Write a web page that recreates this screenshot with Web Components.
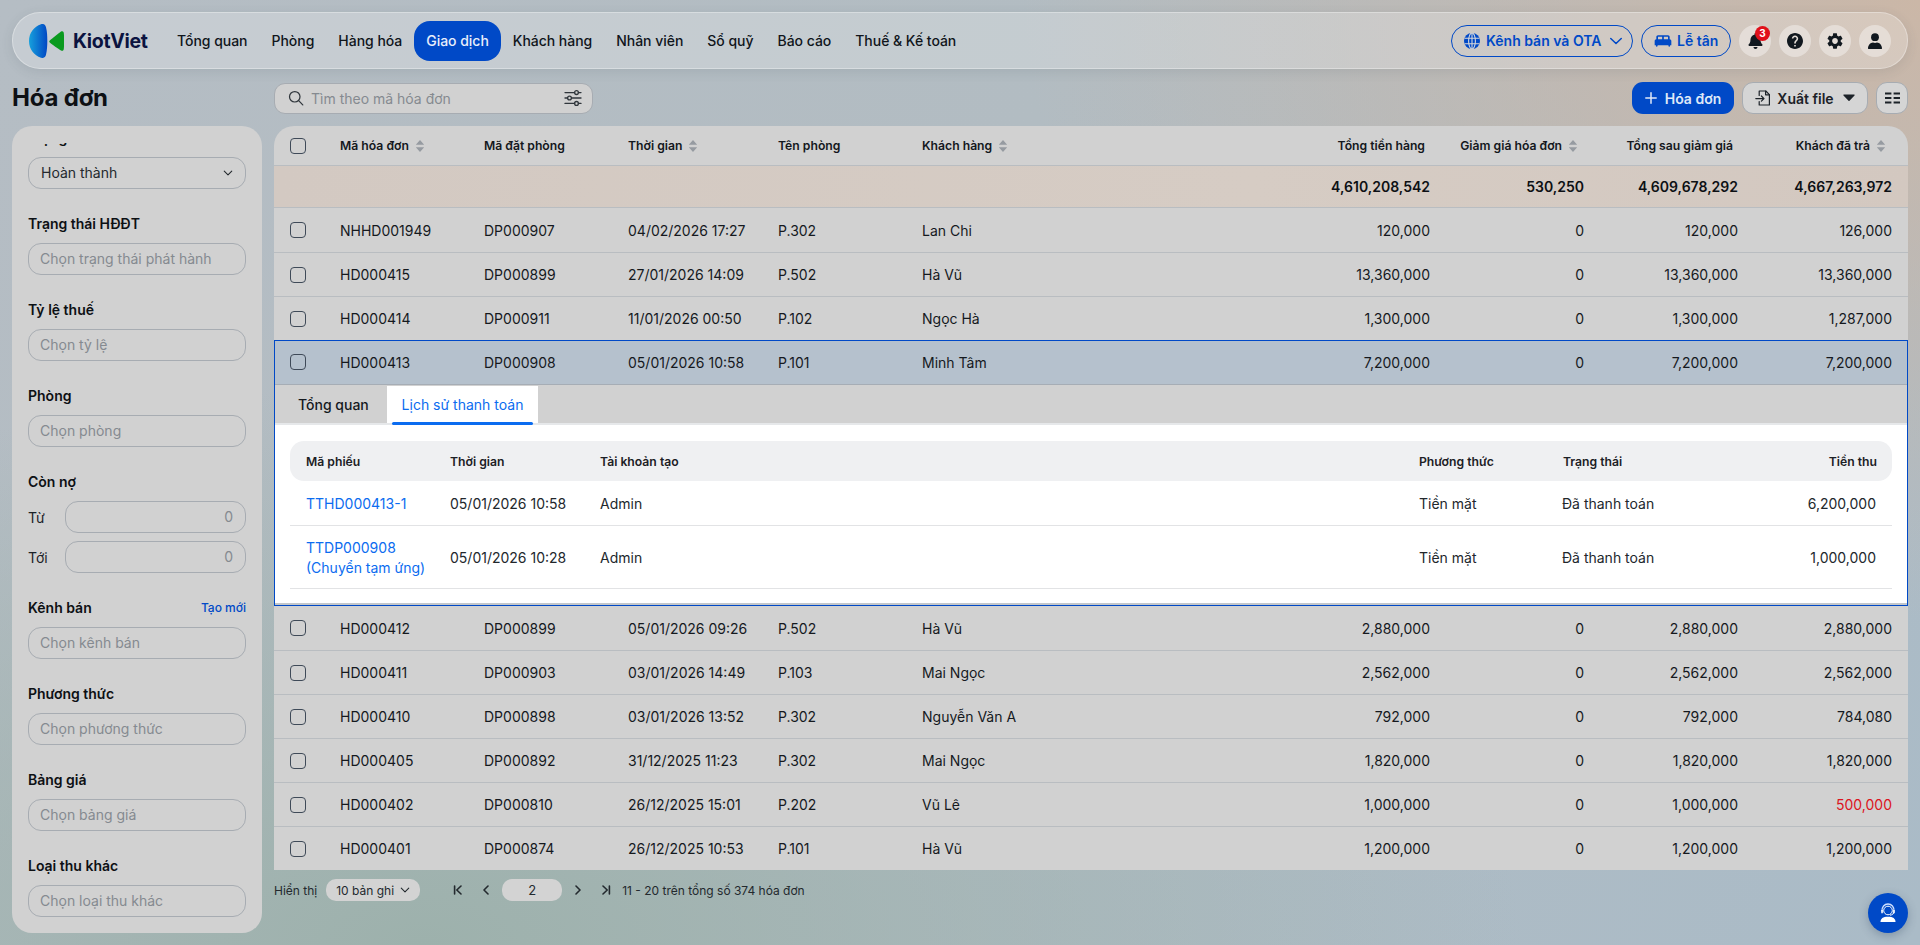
<!DOCTYPE html>
<html lang="vi">
<head>
<meta charset="utf-8">
<title>Hóa đơn - KiotViet</title>
<style>
  html, body { height: 100%; }
  body {
    margin: 0;
    height: 945px;
    overflow: hidden;
    font-family: Inter, "Noto Sans", sans-serif;
    font-size: 14px;
    color: #111418;
    background:
      radial-gradient(900px 620px at 100% 0%, #cbb7a7 0%, rgba(203,183,167,0) 100%),
      radial-gradient(1100px 560px at 22% 100%, #9db1ac 0%, rgba(157,177,172,0) 100%),
      linear-gradient(120deg, #b5bdc4 0%, #b2bcc2 45%, #aabbc7 100%);
  }
</style>
</head>
<body>
<kv-app>
  <kv-topbar slot="top">
    <kv-nav-item>Tổng quan</kv-nav-item>
    <kv-nav-item>Phòng</kv-nav-item>
    <kv-nav-item>Hàng hóa</kv-nav-item>
    <kv-nav-item active>Giao dịch</kv-nav-item>
    <kv-nav-item>Khách hàng</kv-nav-item>
    <kv-nav-item>Nhân viên</kv-nav-item>
    <kv-nav-item>Sổ quỹ</kv-nav-item>
    <kv-nav-item>Báo cáo</kv-nav-item>
    <kv-nav-item>Thuế &amp; Kế toán</kv-nav-item>
  </kv-topbar>

  <kv-page-title slot="title">Hóa đơn</kv-page-title>
  <kv-toolbar slot="tools"></kv-toolbar>

  <kv-sidebar slot="side">
    <kv-field label="Trạng thái" value="Hoàn thành" arrow></kv-field>
    <kv-field label="Trạng thái HĐĐT" placeholder="Chọn trạng thái phát hành"></kv-field>
    <kv-field label="Tỷ lệ thuế" placeholder="Chọn tỷ lệ"></kv-field>
    <kv-field label="Phòng" placeholder="Chọn phòng"></kv-field>
    <kv-range-field label="Còn nợ"></kv-range-field>
    <kv-field label="Kênh bán" placeholder="Chọn kênh bán" action="Tạo mới"></kv-field>
    <kv-field label="Phương thức" placeholder="Chọn phương thức"></kv-field>
    <kv-field label="Bảng giá" placeholder="Chọn bảng giá"></kv-field>
    <kv-field label="Loại thu khác" placeholder="Chọn loại thu khác"></kv-field>
  </kv-sidebar>

  <kv-invoice-table slot="table"></kv-invoice-table>
  <kv-pagination slot="pager"></kv-pagination>
</kv-app>
<kv-chat-button></kv-chat-button>

<script>
const ICONS = {
  search: '<svg viewBox="0 0 18 18" fill="none" stroke="currentColor" stroke-width="1.4" stroke-linecap="round"><circle cx="7.6" cy="7.6" r="5.9"/><path d="M12 12l4.6 4.8"/></svg>',
  sliders: '<svg viewBox="0 0 18 18" fill="none" stroke="currentColor" stroke-width="1.3" stroke-linecap="round"><path d="M1 3.6h9.6M14.4 3.6H17M1 9h2.6M7.4 9H17M1 14.4h9.6M14.4 14.4H17"/><circle cx="12.5" cy="3.6" r="1.9"/><circle cx="5.5" cy="9" r="1.9"/><circle cx="12.5" cy="14.4" r="1.9"/></svg>',
  globe: '<svg viewBox="0 0 16 16"><circle cx="8" cy="8" r="8" fill="currentColor"/><g fill="none" stroke="#d6d8da" stroke-width="1.1"><ellipse cx="8" cy="8" rx="3.4" ry="8"/><path d="M8 0v16M.5 5.3h15M.5 10.7h15"/></g></svg>',
  bed: '<svg viewBox="0 0 24 24" fill="currentColor"><path d="M20 10V7c0-1.1-.9-2-2-2H6c-1.1 0-2 .9-2 2v3c-1.1 0-2 .9-2 2v5h1.33L4 19h1l.67-2h12.67l.66 2h1l.67-2H22v-5c0-1.1-.9-2-2-2zm-9 0H6V7h5v3zm7 0h-5V7h5v3z"/></svg>',
  bell: '<svg viewBox="0 0 448 512" fill="currentColor"><path d="M224 512c35.32 0 63.97-28.65 63.97-64H160.03c0 35.35 28.65 64 63.97 64zm215.39-149.71c-19.32-20.76-55.47-51.99-55.47-154.29 0-77.7-54.48-139.9-127.94-155.16V32c0-17.67-14.32-32-31.98-32s-31.98 14.33-31.98 32v20.84C118.56 68.1 64.08 130.3 64.08 208c0 102.3-36.15 133.53-55.47 154.29-6 6.45-8.66 14.16-8.61 21.71.11 16.4 12.98 32 32.1 32h383.8c19.12 0 32-15.6 32.1-32 .05-7.55-2.61-15.27-8.61-21.71z"/></svg>',
  help: '<svg viewBox="2 2 20 20" fill="currentColor"><path d="M12 2C6.48 2 2 6.48 2 12s4.48 10 10 10 10-4.48 10-10S17.52 2 12 2zm1 17h-2v-2h2v2zm2.07-7.75l-.9.92C13.45 12.9 13 13.5 13 15h-2v-.5c0-1.1.45-2.1 1.17-2.83l1.24-1.26c.37-.36.59-.86.59-1.41 0-1.1-.9-2-2-2s-2 .9-2 2H8c0-2.21 1.79-4 4-4s4 1.79 4 4c0 .88-.36 1.68-.93 2.25z"/></svg>',
  gear: '<svg viewBox="2 2 20 20" fill="currentColor"><path d="M19.14 12.94c.04-.3.06-.61.06-.94 0-.32-.02-.64-.07-.94l2.03-1.58c.18-.14.23-.41.12-.61l-1.92-3.32c-.12-.22-.37-.29-.59-.22l-2.39.96c-.5-.38-1.03-.7-1.62-.94l-.36-2.54c-.04-.24-.24-.41-.48-.41h-3.84c-.24 0-.43.17-.47.41l-.36 2.54c-.59.24-1.13.57-1.62.94l-2.39-.96c-.22-.08-.47 0-.59.22L2.74 8.87c-.12.21-.08.47.12.61l2.03 1.58c-.05.3-.09.63-.09.94s.02.64.07.94l-2.03 1.58c-.18.14-.23.41-.12.61l1.92 3.32c.12.22.37.29.59.22l2.39-.96c.5.38 1.03.7 1.62.94l.36 2.54c.05.24.24.41.48.41h3.84c.24 0 .44-.17.47-.41l.36-2.54c.59-.24 1.13-.56 1.62-.94l2.39.96c.22.08.47 0 .59-.22l1.92-3.32c.12-.22.07-.47-.12-.61l-2.01-1.58zM12 15.6c-1.98 0-3.6-1.62-3.6-3.6s1.62-3.6 3.6-3.6 3.6 1.62 3.6 3.6-1.62 3.6-3.6 3.6z"/></svg>',
  user: '<svg viewBox="0 0 16 16" fill="currentColor"><circle cx="8" cy="4.2" r="3.9"/><path d="M1 15.6c0-3.6 2.4-5.9 5-6.1.6.3 1.3.5 2 .5s1.4-.2 2-.5c2.6.2 5 2.5 5 6.1 0 .2-.2.4-.4.4H1.4c-.2 0-.4-.2-.4-.4z"/></svg>',
  chevron: '<svg viewBox="0 0 12 12" fill="none" stroke="currentColor" stroke-width="1.3" stroke-linecap="round" stroke-linejoin="round"><path d="M1.5 3.8L6 8.2l4.5-4.4"/></svg>',
  caret: '<svg viewBox="0 0 12 8" fill="currentColor"><path d="M1 .5h10c.6 0 .9.7.5 1.1l-5 5.2c-.3.3-.7.3-1 0l-5-5.2C.1 1.2.4.5 1 .5z"/></svg>',
  plus: '<svg viewBox="0 0 12 12" fill="none" stroke="currentColor" stroke-width="1.5" stroke-linecap="round"><path d="M6 .8v10.4M.8 6h10.4"/></svg>',
  exportfile: '<svg viewBox="0 0 16 16" fill="none" stroke="currentColor" stroke-width="1.2" stroke-linecap="round" stroke-linejoin="round"><path d="M4.2 5.4V1h6.6l3.6 3.6V15H4.2v-3.4"/><path d="M10.6 1v3.8h3.8"/><path d="M.8 8.6h8M6.4 6l2.6 2.6-2.6 2.6"/></svg>',
  columns: '<svg viewBox="0 0 15 12" fill="currentColor"><path d="M0 .5h6.4v2H0zM8.6.5H15v2H8.6zM0 5h6.4v2H0zM8.6 5H15v2H8.6zM0 9.5h6.4v2H0zM8.6 9.5H15v2H8.6z"/></svg>',
  first: '<svg viewBox="0 0 10 10" fill="none" stroke="currentColor" stroke-width="1.6" stroke-linecap="round" stroke-linejoin="round"><path d="M1.6 1v8M8 1L3.8 5 8 9"/></svg>',
  prev: '<svg viewBox="0 0 10 10" fill="none" stroke="currentColor" stroke-width="1.6" stroke-linecap="round" stroke-linejoin="round"><path d="M7 1L3 5l4 4"/></svg>',
  next: '<svg viewBox="0 0 10 10" fill="none" stroke="currentColor" stroke-width="1.6" stroke-linecap="round" stroke-linejoin="round"><path d="M3 1l4 4-4 4"/></svg>',
  last: '<svg viewBox="0 0 10 10" fill="none" stroke="currentColor" stroke-width="1.6" stroke-linecap="round" stroke-linejoin="round"><path d="M8.4 1v8M2 1l4.2 4L2 9"/></svg>',
  sort: '<svg viewBox="0 0 9 12" fill="currentColor"><path d="M4.5 0l4.2 4.8H.3zM4.5 12L.3 7.2h8.4z"/></svg>',
  headset: '<svg viewBox="0 0 20 20"><path d="M2.5 19c0-3.4 2.4-5.3 7.5-5.3s7.500 1.900 7.500 5.300z" fill="#fff"/><circle cx="10" cy="7.500" r="4.300" fill="none" stroke="#fff" stroke-width="1"/><path d="M4 8.500C3.600 3.800 6.500 1 10 1s6.400 2.800 6 7.500" fill="none" stroke="#cfe0ff" stroke-width="1.300"/><path d="M16 8.500c0 2-1.500 3.500-4 3.700" fill="none" stroke="#fff" stroke-width="1"/><path d="M3.300 7h1.500v3.300H3.300zM15.200 7h1.500v3.300h-1.500z" fill="#fff"/></svg>'
};

class KvIcon extends HTMLElement {
  connectedCallback() {
    const size = this.getAttribute('size') || 16;
    const height = this.getAttribute('height') || size;
    this.attachShadow({ mode: 'open' }).innerHTML = `
      <style>
        :host { display: inline-flex; flex: none; width: ${size}px; height: ${height}px; }
        svg { width: 100%; height: 100%; display: block; }
      </style>${ICONS[this.getAttribute('name')] || ''}`;
  }
}

class KvApp extends HTMLElement {
  constructor() {
    super();
    this.attachShadow({ mode: 'open' }).innerHTML = `
      <style>
        :host { display: block; padding: 12px 12px 0; }
        .grid {
          display: grid;
          grid-template-columns: 250px 1fr;
          grid-template-rows: 32px auto;
          column-gap: 12px;
          row-gap: 12px;
          margin-top: 13px;
        }
        .right { display: flex; flex-direction: column; min-width: 0; }
      </style>
      <slot name="top"></slot>
      <div class="grid">
        <slot name="title"></slot>
        <slot name="tools"></slot>
        <slot name="side"></slot>
        <div class="right">
          <slot name="table"></slot>
          <slot name="pager"></slot>
        </div>
      </div>`;
  }
}

class KvTopbar extends HTMLElement {
  constructor() {
    super();
    this.attachShadow({ mode: 'open' }).innerHTML = `
      <style>
        :host {
          display: flex;
          align-items: center;
          height: 57px;
          box-sizing: border-box;
          padding: 0 16px;
          border: 1px solid rgba(255,255,255,.32);
          border-radius: 28px;
          background: rgba(255,255,255,.24);
          box-shadow: 0 3px 12px rgba(60,70,80,.12);
        }
        .logo { display: flex; align-items: center; width: 136px; flex: none; }
        .logo svg { width: 35px; height: 34px; flex: none; }
        .brand { margin-left: 9px; font-size: 19.5px; font-weight: 700; letter-spacing: -.3px; color: #0b1340; }
        nav { display: flex; align-items: center; }
        .tools { margin-left: auto; display: flex; align-items: center; gap: 8px; }
        .pill {
          display: flex; align-items: center; height: 32px; box-sizing: border-box; white-space: nowrap;
          padding: 0 12px; border: 1px solid #0049c7; border-radius: 16px;
          color: #0049c7; font-weight: 600;
        }
        .ota { width: 182px; gap: 6px; }
        .ota kv-icon:last-child { margin-left: 2px; }
        .desk { width: 90px; gap: 4px; padding: 0 11px; }
        .round {
          position: relative; width: 32px; height: 32px; border-radius: 50%;
          background: rgba(255,255,255,.38); color: #11181f;
          display: flex; align-items: center; justify-content: center;
        }
        .badge {
          position: absolute; top: 1px; left: 16px; width: 15px; height: 15px; border-radius: 50%;
          background: #e0101a; color: #fff; font-size: 10px; font-weight: 700;
          display: flex; align-items: center; justify-content: center;
        }
      </style>
      <div class="logo">
        <svg viewBox="0 0 35 34">
          <defs><linearGradient id="lens" x1="0" x2="1" y1="0" y2="0"><stop offset="0" stop-color="#17a0dc"/><stop offset="1" stop-color="#0047c4"/></linearGradient></defs>
          <path d="M12 .2c2.500-.8 4.400.5 5 3 1.200 4.600 1.300 9 1.300 13.800 0 4.800-.3 9.200-1.300 13.800-.6 2.500-2.500 3.800-5 3C5 31.500 0 25 0 17S5 2.500 12 .2z" fill="url(#lens)"/>
          <path d="M32 7.600c1.500-1 2.600-.3 2.800 1.400.5 5.300.5 10.700 0 16-.2 1.700-1.300 2.400-2.800 1.400-3-2-8.500-5.600-11.200-8-.7-.7-.7-1.100 0-1.800 2.700-2.400 8.200-6.900 11.200-9z" fill="#0a9a1f"/>
        </svg>
        <span class="brand">KiotViet</span>
      </div>
      <nav><slot></slot></nav>
      <div class="tools">
        <div class="pill ota"><kv-icon name="globe"></kv-icon><span>Kênh bán và OTA</span><kv-icon name="chevron" size="14"></kv-icon></div>
        <div class="pill desk"><kv-icon name="bed" size="20"></kv-icon><span>Lễ tân</span></div>
        <div class="round"><kv-icon name="bell" size="15" height="16"></kv-icon><span class="badge">3</span></div>
        <div class="round"><kv-icon name="help"></kv-icon></div>
        <div class="round"><kv-icon name="gear"></kv-icon></div>
        <div class="round"><kv-icon name="user"></kv-icon></div>
      </div>`;
  }
}

class KvNavItem extends HTMLElement {
  constructor() {
    super();
    this.attachShadow({ mode: 'open' }).innerHTML = `
      <style>
        :host {
          display: flex; align-items: center; height: 40px; padding: 0 12px;
          border-radius: 16px; font-weight: 500; letter-spacing: -.03px; color: #10151b; white-space: nowrap;
        }
        :host([active]) { background: #0049c7; color: #e8eefb; }
      </style><slot></slot>`;
  }
}

class KvPageTitle extends HTMLElement {
  constructor() {
    super();
    this.attachShadow({ mode: 'open' }).innerHTML = `
      <style>:host { display: flex; align-items: center; padding-bottom: 2px; font-size: 24px; font-weight: 700; color: #0d1014; letter-spacing: -.2px; }</style>
      <slot></slot>`;
  }
}

class KvToolbar extends HTMLElement {
  constructor() {
    super();
    this.attachShadow({ mode: 'open' }).innerHTML = `
      <style>
        :host { display: flex; align-items: center; gap: 8px; }
        .search {
          width: 319px; height: 31px; box-sizing: border-box; margin-right: auto;
          display: flex; align-items: center; padding: 0 10px 0 13px; gap: 7px;
          background: #d1d1d1; border: 1px solid #a7acb2; border-radius: 11px; color: #30363c;
        }
        .search span { flex: 1; color: #858a90; }
        .btn {
          height: 32px; box-sizing: border-box; display: flex; align-items: center;
          border-radius: 11px; font-weight: 600;
        }
        .add { width: 102px; justify-content: center; gap: 8px; background: #0049c7; color: #dfe8f8; }
        .ghost { background: #d5d5d5; border: 1px solid #a7acb2; color: #1c2228; }
        .export { width: 126px; justify-content: center; gap: 6px; }
        .cols { width: 32px; justify-content: center; }
      </style>
      <div class="search">
        <kv-icon name="search"></kv-icon><span>Tìm theo mã hóa đơn</span><kv-icon name="sliders" size="18"></kv-icon>
      </div>
      <div class="btn add"><kv-icon name="plus" size="12"></kv-icon>Hóa đơn</div>
      <div class="btn ghost export"><kv-icon name="exportfile"></kv-icon>Xuất file<kv-icon name="caret" size="12" height="8" style="margin-left:3px"></kv-icon></div>
      <div class="btn ghost cols"><kv-icon name="columns" size="15" height="12"></kv-icon></div>`;
  }
}

class KvSidebar extends HTMLElement {
  constructor() {
    super();
    this.attachShadow({ mode: 'open' }).innerHTML = `
      <style>
        :host {
          display: block; height: 807px; box-sizing: border-box;
          padding: 17px 16px 0; background: #d1d1d1; border-radius: 20px;
        }
        .scroll { height: 774px; overflow: hidden; }
        .inner { display: flex; flex-direction: column; gap: 24px; margin-top: -16px; }
      </style>
      <div class="scroll"><div class="inner"><slot></slot></div></div>`;
  }
}

const FIELD_CSS = `
  .head { display: flex; align-items: center; justify-content: space-between; height: 20px; margin-bottom: 10px; }
  .label { font-weight: 600; color: #0d1014; }
  .action { font-size: 12px; font-weight: 500; color: #0049c7; }
  .input {
    height: 32px; box-sizing: border-box; display: flex; align-items: center; justify-content: space-between;
    padding: 0 12px 1px 11px; border: 1px solid #a7acb2; border-radius: 13px; color: #858a90;
  }
  .input.filled { color: #24292e; padding-left: 12px; }
`;

class KvField extends HTMLElement {
  connectedCallback() {
    const value = this.getAttribute('value');
    const action = this.getAttribute('action');
    this.attachShadow({ mode: 'open' }).innerHTML = `
      <style>:host { display: block; } ${FIELD_CSS}</style>
      <div class="head">
        <span class="label">${this.getAttribute('label')}</span>
        ${action ? `<span class="action">${action}</span>` : ''}
      </div>
      <div class="input ${value ? 'filled' : ''}">
        <span>${value || this.getAttribute('placeholder')}</span>
        ${this.hasAttribute('arrow') ? '<kv-icon name="chevron" size="10" style="color:#24292e"></kv-icon>' : ''}
      </div>`;
  }
}

class KvRangeField extends HTMLElement {
  connectedCallback() {
    this.attachShadow({ mode: 'open' }).innerHTML = `
      <style>
        :host { display: block; } ${FIELD_CSS}
        .line { display: grid; grid-template-columns: 37px 1fr; align-items: center; margin-bottom: 8px; color: #1c2228; }
        .line:last-child { margin-bottom: 0; }
        .input { justify-content: flex-end; }
      </style>
      <div class="head"><span class="label">${this.getAttribute('label')}</span></div>
      <div class="line"><span>Từ</span><div class="input">0</div></div>
      <div class="line"><span>Tới</span><div class="input">0</div></div>`;
  }
}

const ROW_CSS = `
  :host { display: block; }
  .row {
    display: grid; grid-template-columns: var(--cols); align-items: center;
    padding: 0 16px; height: 44px; box-sizing: border-box; border-bottom: 1px solid #b9bdc1;
    color: #15191e;
  }
  .num { text-align: right; }
  .box { display: block; width: 16px; height: 16px; box-sizing: border-box; border: 1.4px solid #3f4a58; border-radius: 4px; }
`;

class KvInvoiceRow extends HTMLElement {
  connectedCallback() {
    const a = (n) => this.getAttribute(n);
    this.attachShadow({ mode: 'open' }).innerHTML = `
      <style>${ROW_CSS}
        :host([lead]) .row { height: 45px; }
        :host([selected]) .row { height: 45px; background: #b5c1cd; border-bottom-color: #a6adb5; }
        .debt { color: #dc1420; }
      </style>
      <div class="row">
        <span class="box"></span>
        <span>${a('code')}</span><span>${a('booking')}</span><span>${a('time')}</span>
        <span>${a('room')}</span><span>${a('customer')}</span>
        <span class="num">${a('total')}</span><span class="num">${a('discount')}</span>
        <span class="num">${a('net')}</span><span class="num ${this.hasAttribute('debt') ? 'debt' : ''}">${a('paid')}</span>
      </div>`;
  }
}

class KvPaymentPanel extends HTMLElement {
  constructor() {
    super();
    const rows = [
      { code: 'TTHD000413-1', time: '05/01/2026 10:58', amount: '6,200,000' },
      { code: 'TTDP000908<br>(Chuyển tạm ứng)', time: '05/01/2026 10:28', amount: '1,000,000', tall: true }
    ];
    this.attachShadow({ mode: 'open' }).innerHTML = `
      <style>
        :host { display: block; }
        .tabs { display: flex; height: 38px; padding-left: 8px; box-sizing: border-box; }
        .tab { position: relative; display: flex; align-items: center; padding: 0 14px; color: #15191e; font-weight: 500; }
        .tab:first-child { width: 105px; box-sizing: border-box; padding-left: 16px; }
        .tab.on { width: 151px; box-sizing: border-box; justify-content: center; margin-top: 1px; background: #fff; color: #0b6cf0; font-weight: 400; }
        .tab.on::after {
          content: ""; position: absolute; left: 5px; right: 5px; bottom: -2px; height: 3px;
          border-radius: 2px; background: #0b6cf0;
        }
        .body {
          background: #fff; padding: 16px 16px 14px;
          border-top: 2px solid #e6e8ea; border-bottom: 3px solid #c3c7cb;
        }
        .line {
          display: grid; grid-template-columns: 144px 150px 819px 144px 150px 1fr; align-items: center;
          padding: 0 16px; border-bottom: 1px solid #e2e3e5; color: #22272c; height: 45px; box-sizing: border-box;
        }
        .line.tall { height: 63px; padding-top: 1px; line-height: 20px; }
        .line.th {
          height: 40px; border: 0; border-radius: 14px; background: #eff0f2; padding-right: 15px;
          font-size: 12.2px; font-weight: 600; color: #1c2025;
        }
        .line .status { margin-left: -1px; }
        .link { color: #0b6cf0; }
        .num { text-align: right; }
      </style>
      <div class="tabs"><div class="tab">Tổng quan</div><div class="tab on">Lịch sử thanh toán</div></div>
      <div class="body">
        <div class="line th"><span>Mã phiếu</span><span>Thời gian</span><span>Tài khoản tạo</span><span>Phương thức</span><span>Trạng thái</span><span class="num">Tiền thu</span></div>
        ${rows.map((r) => `
          <div class="line ${r.tall ? 'tall' : ''}">
            <span class="link">${r.code}</span><span>${r.time}</span><span>Admin</span><span>Tiền mặt</span><span class="status">Đã thanh toán</span><span class="num">${r.amount}</span>
          </div>`).join('')}
      </div>`;
  }
}

class KvSelectedBlock extends HTMLElement {
  constructor() {
    super();
    this.attachShadow({ mode: 'open' }).innerHTML = `
      <style>:host { display: block; margin-top: -1px; outline: 1px solid #0049c7; outline-offset: -1px; position: relative; z-index: 1; }
      div { position: relative; z-index: -1; }</style>
      <div><slot></slot></div>`;
  }
}

class KvInvoiceTable extends HTMLElement {
  constructor() {
    super();
    const before = [
      ['NHHD001949', 'DP000907', '04/02/2026 17:27', 'P.302', 'Lan Chi', '120,000', '0', '120,000', '126,000'],
      ['HD000415', 'DP000899', '27/01/2026 14:09', 'P.502', 'Hà Vũ', '13,360,000', '0', '13,360,000', '13,360,000'],
      ['HD000414', 'DP000911', '11/01/2026 00:50', 'P.102', 'Ngọc Hà', '1,300,000', '0', '1,300,000', '1,287,000']
    ];
    const after = [
      ['HD000412', 'DP000899', '05/01/2026 09:26', 'P.502', 'Hà Vũ', '2,880,000', '0', '2,880,000', '2,880,000'],
      ['HD000411', 'DP000903', '03/01/2026 14:49', 'P.103', 'Mai Ngọc', '2,562,000', '0', '2,562,000', '2,562,000'],
      ['HD000410', 'DP000898', '03/01/2026 13:52', 'P.302', 'Nguyễn Văn A', '792,000', '0', '792,000', '784,080'],
      ['HD000405', 'DP000892', '31/12/2025 11:23', 'P.302', 'Mai Ngọc', '1,820,000', '0', '1,820,000', '1,820,000'],
      ['HD000402', 'DP000810', '26/12/2025 15:01', 'P.202', 'Vũ Lê', '1,000,000', '0', '1,000,000', '500,000', 'debt'],
      ['HD000401', 'DP000874', '26/12/2025 10:53', 'P.101', 'Hà Vũ', '1,200,000', '0', '1,200,000', '1,200,000']
    ];
    const row = (r, extra = '') => `<kv-invoice-row code="${r[0]}" booking="${r[1]}" time="${r[2]}" room="${r[3]}" customer="${r[4]}" total="${r[5]}" discount="${r[6]}" net="${r[7]}" paid="${r[8]}" ${r[9] || ''} ${extra}></kv-invoice-row>`;
    const sort = '<kv-icon name="sort" size="10" height="12"></kv-icon>';
    this.attachShadow({ mode: 'open' }).innerHTML = `
      <style>${ROW_CSS}
        :host {
          --cols: 50px 144px 144px 150px 144px 1fr 154px 154px 154px 154px;
          display: block; height: 744px; overflow: hidden; background: #d1d1d1; border-radius: 20px 20px 0 0;
        }
        .head { height: 40px; font-size: 12.2px; font-weight: 600; color: #14181d; }
        .head span { display: inline-flex; align-items: center; gap: 6px; color: #14181d; }
        .head kv-icon { color: #969ba1; }
        .head .num { justify-content: flex-end; padding-right: 5px; }
        .head .num.sorted { padding-right: 6px; }
        .total { height: 42px; background: linear-gradient(90deg, #d3c9c2, #d6ccc4 60%, #d3c8c0); font-weight: 600; color: #0d1014; }
      </style>
      <div class="row head">
        <span class="box"></span>
        <span>Mã hóa đơn ${sort}</span><span>Mã đặt phòng</span><span>Thời gian ${sort}</span><span>Tên phòng</span>
        <span>Khách hàng ${sort}</span><span class="num">Tổng tiền hàng</span>
        <span class="num sorted">Giảm giá hóa đơn ${sort}</span><span class="num">Tổng sau giảm giá</span><span class="num sorted">Khách đã trả ${sort}</span>
      </div>
      <div class="row total">
        <span></span><span></span><span></span><span></span><span></span><span></span>
        <span class="num">4,610,208,542</span><span class="num">530,250</span><span class="num">4,609,678,292</span><span class="num">4,667,263,972</span>
      </div>
      ${before.map((r, i) => row(r, i === 0 ? 'lead' : '')).join('')}
      <kv-selected-block>
        ${row(['HD000413', 'DP000908', '05/01/2026 10:58', 'P.101', 'Minh Tâm', '7,200,000', '0', '7,200,000', '7,200,000'], 'selected')}
        <kv-payment-panel></kv-payment-panel>
      </kv-selected-block>
      ${after.map((r, i) => row(r, i === 0 ? 'lead' : '')).join('')}`;
  }
}

class KvPagination extends HTMLElement {
  constructor() {
    super();
    this.attachShadow({ mode: 'open' }).innerHTML = `
      <style>
        :host { display: flex; align-items: center; height: 22px; margin-top: 9px; font-size: 12px; color: #23292e; }
        .select {
          width: 94px; height: 22px; box-sizing: border-box; margin-left: 9px; padding: 0 10px;
          display: flex; align-items: center; justify-content: space-between;
          background: #d3d3d3; border-radius: 10px;
        }
        .pages { display: flex; align-items: center; margin-left: 33px; }
        .pages kv-icon { width: 10px; }
        .page {
          width: 60px; height: 22px; margin: 0 11px; display: flex; align-items: center; justify-content: center;
          background: #d3d3d3; border-radius: 10px; font-size: 13px;
        }
        .gap { margin-left: 18px; }
        .info { margin-left: 11px; }
      </style>
      <span>Hiển thị</span>
      <div class="select"><span>10 bản ghi</span><kv-icon name="chevron" size="10"></kv-icon></div>
      <div class="pages">
        <kv-icon name="first" size="10"></kv-icon>
        <kv-icon name="prev" size="10" class="gap"></kv-icon>
        <div class="page">2</div>
        <kv-icon name="next" size="10"></kv-icon>
        <kv-icon name="last" size="10" class="gap"></kv-icon>
      </div>
      <span class="info">11 - 20 trên tổng số 374 hóa đơn</span>`;
  }
}

class KvChatButton extends HTMLElement {
  constructor() {
    super();
    this.attachShadow({ mode: 'open' }).innerHTML = `
      <style>
        :host {
          position: fixed; right: 12px; bottom: 12px; width: 40px; height: 40px; border-radius: 50%;
          background: #0049c7; display: flex; align-items: center; justify-content: center;
          box-shadow: 0 3px 10px rgba(40,60,90,.3);
        }
      </style>
      <kv-icon name="headset" size="20"></kv-icon>`;
  }
}

customElements.define('kv-icon', KvIcon);
customElements.define('kv-app', KvApp);
customElements.define('kv-topbar', KvTopbar);
customElements.define('kv-nav-item', KvNavItem);
customElements.define('kv-page-title', KvPageTitle);
customElements.define('kv-toolbar', KvToolbar);
customElements.define('kv-sidebar', KvSidebar);
customElements.define('kv-field', KvField);
customElements.define('kv-range-field', KvRangeField);
customElements.define('kv-invoice-row', KvInvoiceRow);
customElements.define('kv-payment-panel', KvPaymentPanel);
customElements.define('kv-selected-block', KvSelectedBlock);
customElements.define('kv-invoice-table', KvInvoiceTable);
customElements.define('kv-pagination', KvPagination);
customElements.define('kv-chat-button', KvChatButton);
</script>
</body>
</html>
